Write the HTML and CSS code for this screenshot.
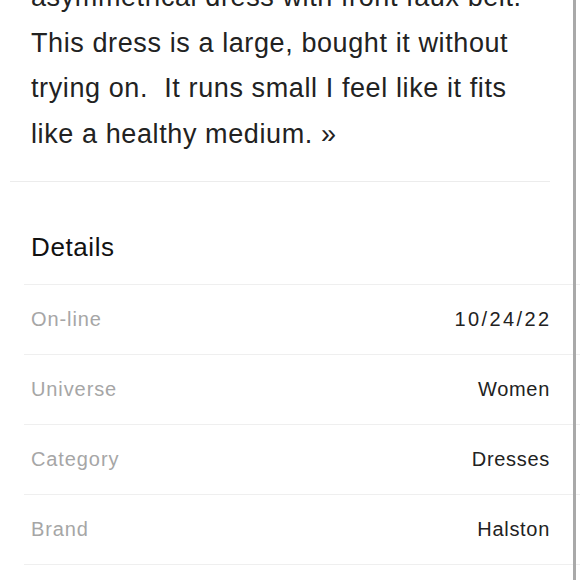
FILE: index.html
```html
<!DOCTYPE html>
<html>
<head>
<meta charset="utf-8">
<link rel="stylesheet" href="styles.css">
</head>
<body>
<div class="page">
  <p class="desc">asymmetrical dress with front faux belt.<br>This dress is a large, bought it without trying on.&nbsp; It runs small I feel like it fits like a healthy medium. »</p>
  <div class="divider"></div>
  <section class="details">
    <h2 class="details-title">Details</h2>
    <div class="row"><span class="label">On-line</span><span class="value date">10/24/22</span></div>
    <div class="row"><span class="label">Universe</span><span class="value">Women</span></div>
    <div class="row"><span class="label">Category</span><span class="value">Dresses</span></div>
    <div class="row"><span class="label">Brand</span><span class="value">Halston</span></div>
    <div class="row-end"></div>
  </section>
</div>
<div class="scrollbar"></div>
</body>
</html>
```
FILE: styles.css
```css
html, body {
  margin: 0;
  padding: 0;
  background: #fff;
  overflow: hidden;
  height: 580px;
}
body {
  font-family: "Liberation Sans", Arial, sans-serif;
  color: #222;
}
.page {
  width: 580px;
}
.desc {
  margin: -25px 0 0 0;
  width: 492px;
  padding-left: 31px;
  font-size: 27px;
  line-height: 45.5px;
  letter-spacing: 0.6px;
  color: #222;
}
.divider {
  margin: 24px 30px 0 10px;
  height: 1px;
  background: #ececec;
}
.details {
  margin-left: 24px;
  padding-top: 49px;
}
.details-title {
  margin: 0 0 21px 0;
  padding-left: 7px;
  font-size: 26px;
  line-height: 32px;
  letter-spacing: 0.6px;
  font-weight: normal;
  color: #111;
}
.row {
  display: flex;
  justify-content: space-between;
  align-items: center;
  height: 69px;
  border-top: 1px solid #efefef;
  padding: 0 30px 0 7px;
  font-size: 20px;
  letter-spacing: 0.7px;
}
.row-end {
  border-top: 1px solid #efefef;
  height: 20px;
}
.label {
  color: #a6a6a6;
  letter-spacing: 0.9px;
}
.value {
  color: #222;
}
.date {
  letter-spacing: 2.4px;
  margin-right: -1.5px;
}
.scrollbar {
  position: fixed;
  top: 0;
  left: 573px;
  width: 3px;
  height: 580px;
  background: #a9a9a9;
}
```
